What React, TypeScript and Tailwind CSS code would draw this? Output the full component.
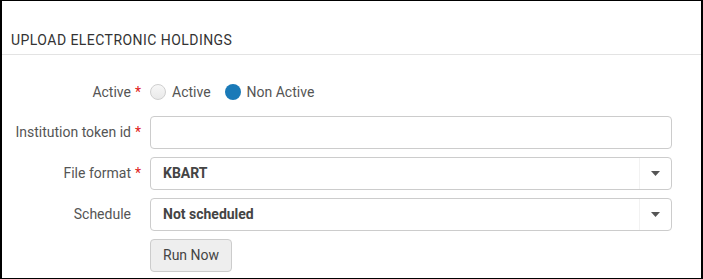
import React from "react";

const Req = () => <span className="ml-1 text-[#e02020]">*</span>;

const Row = ({
  label,
  required,
  className = "",
  children,
}: {
  label: string;
  required?: boolean;
  className?: string;
  children: React.ReactNode;
}) => (
  <div className={`flex items-center ${className}`}>
    <div className="w-[148px] shrink-0 pr-[9px] text-right">
      <span>{label}</span>
      {required ? <Req /> : <span className="ml-1 invisible">*</span>}
    </div>
    <div className="flex-1 pr-[29px]">{children}</div>
  </div>
);

const Select = ({ value }: { value: string }) => (
  <div className="flex h-[33px] items-center rounded-[4px] border border-[#cccccc] bg-white">
    <span className="flex-1 pl-[12px] font-bold text-[#444]">{value}</span>
    <div className="flex h-full w-[32px] items-center justify-center border-l border-[#f2f2f2]">
      <svg width="9" height="5" viewBox="0 0 9 5">
        <path d="M0 0h9L4.5 5z" fill="#555" />
      </svg>
    </div>
  </div>
);

export default function App() {
  return (
    <div
      className="h-[279px] w-[703px] overflow-hidden border-x-2 border-y border-black bg-white text-[14px] text-[#555]"
      style={{ fontFamily: "Roboto, 'Liberation Sans', sans-serif" }}
    >
      <div className="border-b border-[#e3e3e3] px-[9px] pt-[29px] pb-[3px]">
        <h1 className="text-[14px] tracking-[0.45px] text-[#333]">UPLOAD ELECTRONIC HOLDINGS</h1>
      </div>

      <div className="flex flex-col gap-[8px] pt-[25px]">
        <Row label="Active" required className="mb-[4px]">
          <div className="flex h-[24px] items-center gap-[6px]">
            <span className="h-[16px] w-[16px] rounded-full border border-[#cfcfcf] bg-gradient-to-b from-[#f7f7f7] to-[#e9e9e9]" />
            <span className="mr-[8px]">Active</span>
            <span className="h-[16px] w-[16px] rounded-full bg-[#1a7ab8]" />
            <span>Non Active</span>
          </div>
        </Row>
        <Row label="Institution token id" required>
          <div className="h-[33px] rounded-[4px] border border-[#cccccc] bg-white" />
        </Row>
        <Row label="File format" required>
          <Select value="KBART" />
        </Row>
        <Row label="Schedule">
          <Select value="Not scheduled" />
        </Row>
        <Row label="">
          <button className="h-[33px] rounded-[4px] border border-[#cccccc] bg-[#eeeeee] px-[12px] text-[#444]">
            Run Now
          </button>
        </Row>
      </div>
    </div>
  );
}
